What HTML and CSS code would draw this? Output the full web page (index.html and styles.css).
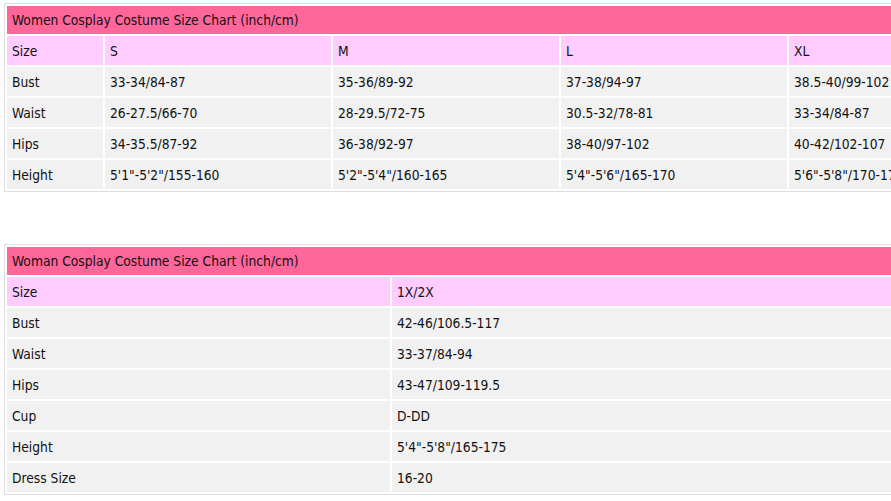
FILE: index.html
```html
<!DOCTYPE html>
<html>
<head>
<meta charset="utf-8">
<link rel="stylesheet" href="styles.css">
</head>
<body>
<div class="page">
  <table class="chart chart-one">
    <colgroup>
      <col class="c-label">
      <col class="c-size">
      <col class="c-size">
      <col class="c-size">
      <col class="c-size">
    </colgroup>
    <tr class="title"><td colspan="5">Women Cosplay Costume Size Chart (inch/cm)</td></tr>
    <tr class="head"><td>Size</td><td>S</td><td>M</td><td>L</td><td>XL</td></tr>
    <tr><td>Bust</td><td>33-34/84-87</td><td>35-36/89-92</td><td>37-38/94-97</td><td>38.5-40/99-102</td></tr>
    <tr><td>Waist</td><td>26-27.5/66-70</td><td>28-29.5/72-75</td><td>30.5-32/78-81</td><td>33-34/84-87</td></tr>
    <tr><td>Hips</td><td>34-35.5/87-92</td><td>36-38/92-97</td><td>38-40/97-102</td><td>40-42/102-107</td></tr>
    <tr><td>Height</td><td>5'1"-5'2"/155-160</td><td>5'2"-5'4"/160-165</td><td>5'4"-5'6"/165-170</td><td>5'6"-5'8"/170-175</td></tr>
  </table>

  <table class="chart chart-two">
    <colgroup>
      <col class="c-wide">
      <col class="c-rest">
    </colgroup>
    <tr class="title"><td colspan="2">Woman Cosplay Costume Size Chart (inch/cm)</td></tr>
    <tr class="head"><td>Size</td><td>1X/2X</td></tr>
    <tr><td>Bust</td><td>42-46/106.5-117</td></tr>
    <tr><td>Waist</td><td>33-37/84-94</td></tr>
    <tr><td>Hips</td><td>43-47/109-119.5</td></tr>
    <tr><td>Cup</td><td>D-DD</td></tr>
    <tr><td>Height</td><td>5'4"-5'8"/165-175</td></tr>
    <tr><td>Dress Size</td><td>16-20</td></tr>
  </table>
</div>
</body>
</html>
```

FILE: styles.css
```css
html, body {
  margin: 0;
  padding: 0;
  background: #ffffff;
  overflow: hidden;
}

.page {
  padding: 3px 0 0 4px;
  font-family: "DejaVu Sans Condensed", "DejaVu Sans", Tahoma, sans-serif;
  font-size: 13.7px;
  color: #111111;
}

.chart {
  border-collapse: separate;
  border-spacing: 2px;
  border: 1px solid #dddddd;
  table-layout: fixed;
  width: 1014px;
}

.chart-two {
  margin-top: 52px;
}

.chart td {
  padding: 0 5px;
  height: 29px;
  box-sizing: border-box;
  background: #f1f1f1;
  white-space: nowrap;
  overflow: hidden;
  vertical-align: middle;
}

.chart .title td {
  background: #ff6699;
  height: 28px;
}

.chart .head td {
  background: #ffccff;
}

.c-label { width: 96px; }
.c-size { width: 226px; }
.c-wide { width: 383px; }
.c-rest { width: auto; }
```
